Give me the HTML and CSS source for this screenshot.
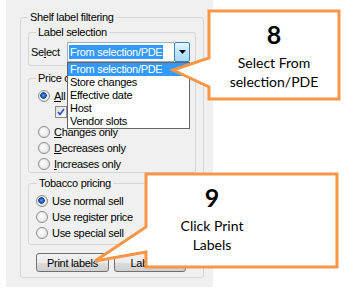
FILE: index.html
```html
<!DOCTYPE html>
<html lang="en">
<head>
  <meta charset="UTF-8">
  <title>Shelf label filtering</title>
  <link rel="stylesheet" href="styles.css">
</head>
<body>

  <div class="panel">
    <fieldset class="group group-outer">
      <legend>Shelf label filtering</legend>

      <!-- Label selection -->
      <fieldset class="group group-select">
        <legend>Label selection</legend>
        <div class="select-row">
          <span class="select-label">Se<u>l</u>ect</span>
          <div class="combo">
            <div class="combo-field"><span class="combo-value">From selection/PDE</span></div>
            <div class="combo-btn">
              <svg width="7" height="4" viewBox="0 0 7 4"><path d="M0 0h7L3.5 4z" fill="#000"/></svg>
            </div>
            <ul class="combo-list">
              <li class="active">From selection/PDE</li>
              <li>Store changes</li>
              <li>Effective date</li>
              <li>Host</li>
              <li>Vendor slots</li>
            </ul>
          </div>
        </div>
      </fieldset>

      <!-- Price changes -->
      <fieldset class="group group-price">
        <legend>Price c</legend>
        <div class="option"><span class="radio checked"></span><span><u>A</u>ll</span></div>
        <div class="option option-sub">
          <span class="check">
            <svg width="8" height="8" viewBox="0 0 8 8"><path d="M1 4l2 2.5L7 1" fill="none" stroke="#2350b8" stroke-width="1.6"/></svg>
          </span>
        </div>
        <div class="option option-gap"><span class="radio"></span><span><u>C</u>hanges only</span></div>
        <div class="option"><span class="radio"></span><span><u>D</u>ecreases only</span></div>
        <div class="option"><span class="radio"></span><span><u>I</u>ncreases only</span></div>
      </fieldset>

      <!-- Tobacco pricing -->
      <fieldset class="group group-tobacco">
        <legend>Tobacco pricing</legend>
        <div class="option"><span class="radio checked"></span><span>Use normal sell</span></div>
        <div class="option"><span class="radio"></span><span>Use register price</span></div>
        <div class="option"><span class="radio"></span><span>Use special sell</span></div>
      </fieldset>

      <div class="buttons">
        <button class="btn btn-print">Print labels</button>
        <button class="btn btn-other">Labels...</button>
      </div>
    </fieldset>
  </div>

  <!-- Callouts -->
  <svg class="callouts" width="351" height="291" viewBox="0 0 351 291">
    <polygon points="209,11 339,11 339,99 209,99 209,87 173,70 209,58" fill="#fff" stroke="#f79646" stroke-width="3"/>
    <polygon points="146,174 337,174 337,267 146,267 146,252 95,261 146,227" fill="#fff" stroke="#f79646" stroke-width="3"/>
  </svg>

  <div class="note note-8">
    <div class="note-num">8</div>
    <div class="note-text">Select From<br>selection/PDE</div>
  </div>

  <div class="note note-9">
    <div class="note-num">9</div>
    <div class="note-text">Click Print<br>Labels</div>
  </div>

</body>
</html>
```

FILE: styles.css
```css
* {
  box-sizing: border-box;
}

body {
  margin: 0;
  background: #fff;
  color: #000;
  font-family: "Liberation Sans", Arial, sans-serif;
  font-size: 11px;
  letter-spacing: -0.3px;
  position: relative;
  width: 351px;
  height: 291px;
  overflow: hidden;
}

.panel {
  margin-left: 6px;
  width: 207px;
  height: 287px;
  padding-top: 11px;
  background: #f0f0f0;
}

.group {
  margin: 0;
  min-width: 0;
  border: 1px solid #d5d5d5;
  border-radius: 3px;
}

.group legend {
  padding: 0 2px;
  line-height: 13px;
}

.group-outer {
  margin-left: 14px;
  width: 184px;
  padding: 0 7px 5px 7px;
}

.group-select {
  margin-top: 2px;
  padding: 3px 5px 3px 2px;
}

.group-select legend {
  margin-left: 5px;
}

.group-price legend {
  margin-left: -2px;
}

.group-tobacco legend {
  margin-left: 1px;
}

.select-row {
  display: flex;
  align-items: center;
  height: 20px;
}

.select-label {
  width: 36px;
}

.combo {
  position: relative;
  display: flex;
  width: 123px;
  height: 20px;
}

.combo-field {
  flex: 1;
  display: flex;
  align-items: center;
  background: #fff;
  border: 1px solid #a5acb5;
  border-right: none;
  padding-left: 1px;
}

.combo-value {
  background: #3399ff;
  color: #fff;
  line-height: 14px;
  padding: 0 1px;
}

.combo-btn {
  width: 16px;
  display: flex;
  align-items: center;
  justify-content: center;
  border: 1px solid #3c7fb1;
  border-radius: 2px;
  background: linear-gradient(#eaf6fd, #bee6fd 50%, #a7d9f5);
}

.combo-list {
  position: absolute;
  top: 20px;
  left: 0;
  width: 123px;
  height: 67px;
  margin: 0;
  padding: 0;
  list-style: none;
  background: #fff;
  border: 1px solid #646464;
  z-index: 2;
}

.combo-list li {
  line-height: 13px;
  padding-left: 2px;
}

.combo-list li.active {
  background: #3399ff;
  color: #fff;
}

.group-price {
  margin-top: 6px;
  padding: 3px 5px 0 9px;
}

.group-tobacco {
  margin-top: 4px;
  padding: 3px 5px 3px 7px;
}

.option {
  display: flex;
  align-items: center;
  height: 16px;
  gap: 4px;
  white-space: nowrap;
}

.option-sub {
  padding-left: 17px;
}

.option-gap {
  margin-top: 4px;
}

.radio {
  flex: none;
  width: 12px;
  height: 12px;
  border-radius: 50%;
  border: 1px solid #8b8b8b;
  background: radial-gradient(circle at 40% 40%, #fff, #dcdcdc);
}

.radio.checked {
  background:
    radial-gradient(circle at 45% 45%, #5fa3ee 0, #1d5fb9 2px, #13418c 3px, transparent 3.5px),
    radial-gradient(circle at 40% 40%, #fff, #dcdcdc);
}

.check {
  flex: none;
  width: 12px;
  height: 12px;
  display: flex;
  align-items: center;
  justify-content: center;
  border: 1px solid #8b8b8b;
  background: linear-gradient(135deg, #dcdcdc, #fff);
}

.buttons {
  display: flex;
  gap: 5px;
  margin-top: 8px;
  margin-left: 8px;
}

.btn {
  height: 19px;
  padding: 0;
  font-family: inherit;
  font-size: 11px;
  letter-spacing: -0.3px;
  color: #000;
  border: 1px solid #707070;
  border-radius: 3px;
  background: linear-gradient(#f2f2f2, #ebebeb 50%, #dddddd 51%, #cfcfcf);
}

.btn-print {
  width: 73px;
}

.btn-other {
  width: 72px;
}

.callouts {
  position: absolute;
  top: 0;
  left: 0;
  z-index: 3;
}

.note {
  position: absolute;
  z-index: 4;
  width: 130px;
  text-align: center;
  font-family: Lato, "Open Sans", sans-serif;
  letter-spacing: 0;
  padding-top: 9px;
}

.note-8 {
  left: 209px;
  top: 11px;
}

.note-9 {
  left: 147px;
  top: 174px;
}

.note-num {
  font-size: 25px;
  font-weight: bold;
  line-height: 28px;
}

.note-text {
  margin-top: 5px;
  font-size: 14px;
  line-height: 19px;
}
```
